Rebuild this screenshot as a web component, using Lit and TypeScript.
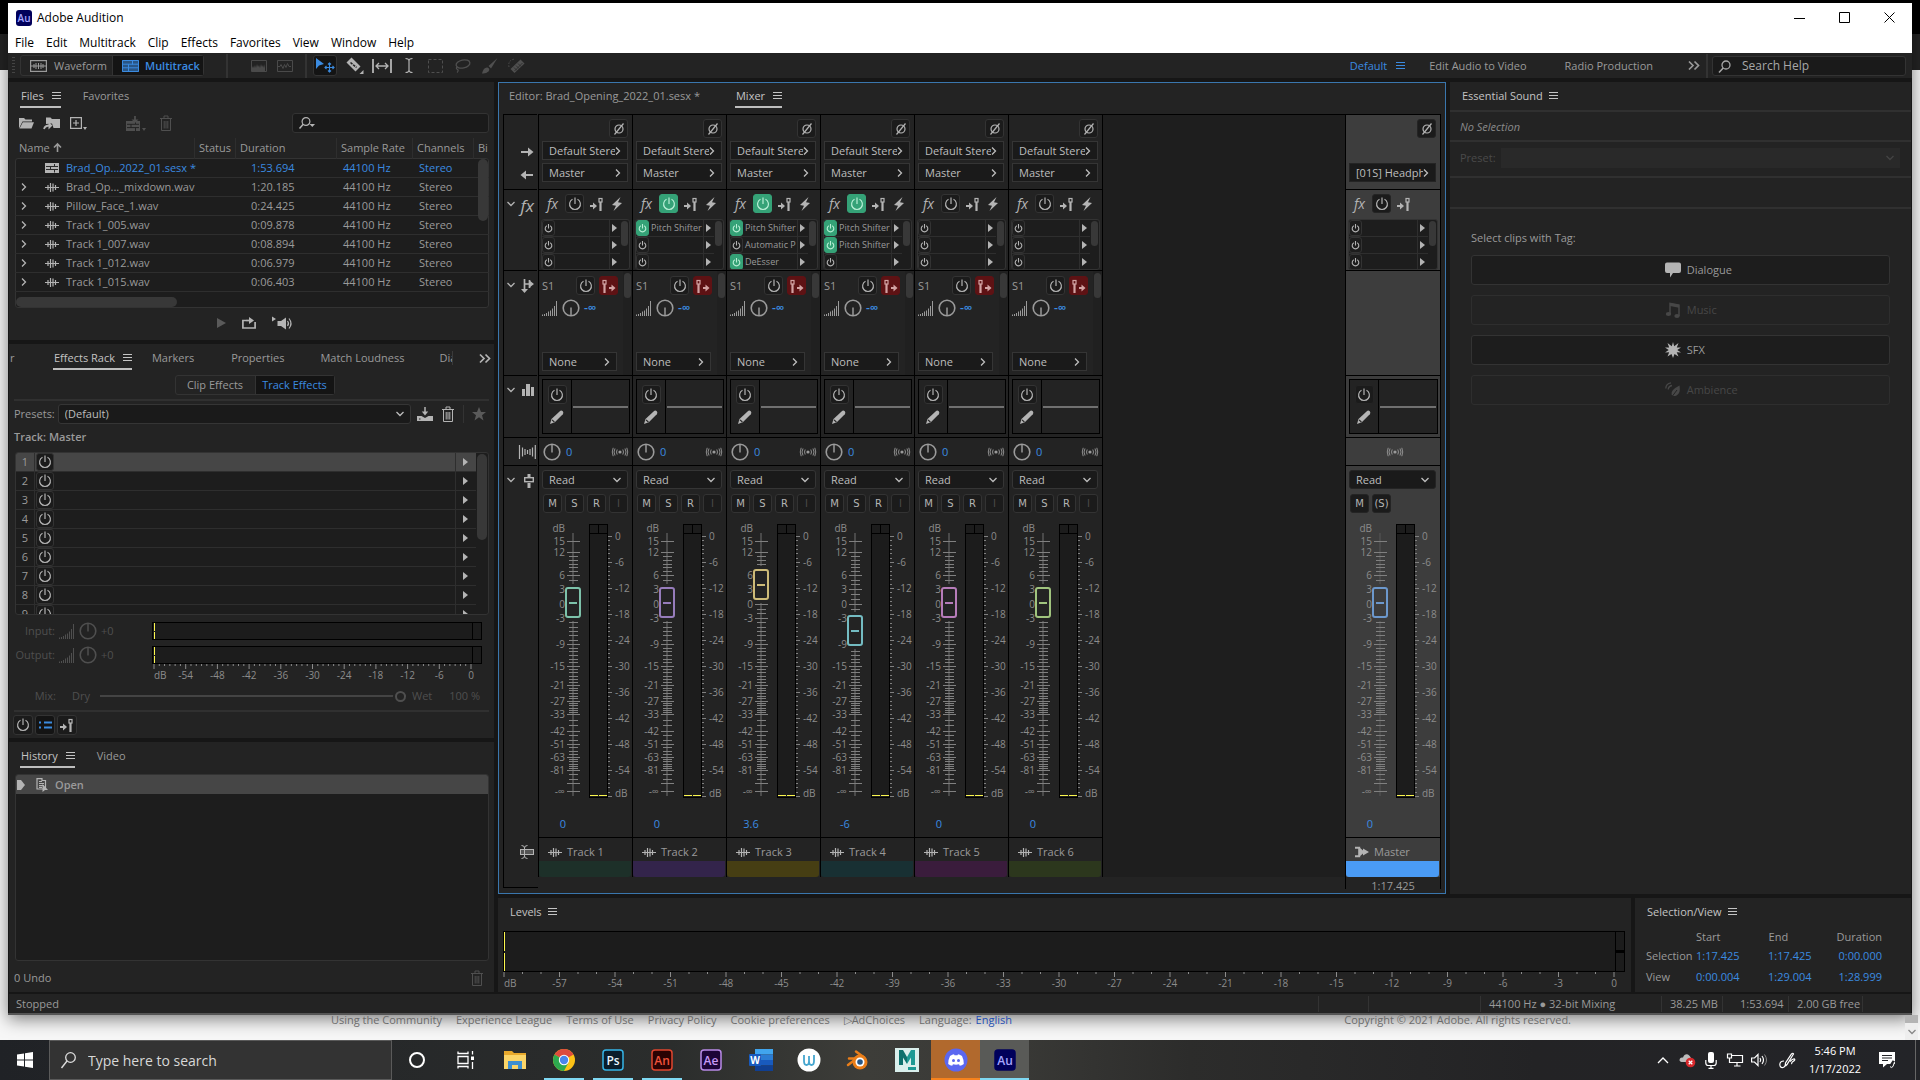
import { LitElement, html, css, svg, nothing } from "lit";
import { customElement, property } from "lit/decorators.js";
import { classMap } from "lit/directives/class-map.js";

/* ---------- icons: [width, height, drawing] ---------- */
const wave = svg`<path d="M0 6.500h14M3 4v5M5.500 2v9M8 2.500v8M10.500 4v5" stroke="currentColor" stroke-width="1.200" fill="none"/>`;
const trash = svg`<path d="M1 3.500h12M5 3V1h4v2M2.500 4v11.500h9V4M5.200 6v7.500M7 6v7.500M8.800 6v7.500" stroke="currentColor" fill="none"/>`;
const lens = svg`<circle cx="8" cy="5" r="4" fill="none" stroke="currentColor" stroke-width="1.300"/><path d="M5.200 8L1 12.500" stroke="currentColor" stroke-width="1.500"/>`;
const slider = (x: number) => svg`<path d="M${x} 5v9" stroke="currentColor" stroke-width="2.200"/><rect x="${x - 1.5}" y="1.500" width="3" height="3.500" fill="none" stroke="currentColor" stroke-width="1.200"/>`;

const ICONS: Record<string, [number, number, unknown]> = {
  wave: [14, 13, wave],
  trash: [14, 16, trash],
  lens: [13, 13, lens],
  burger: [9, 8, svg`<path d="M0 0.500h9M0 3.500h9M0 6.500h9" stroke="currentColor"/>`],
  power: [14, 14, svg`<path d="M4.500 2.300A5.400 5.400 0 1 0 9.500 2.300M7 0.500v6.500" fill="none" stroke="currentColor" stroke-width="1.200"/>`],
  powerSmall: [9, 9, svg`<path d="M2.800 1.700A3.300 3.300 0 1 0 6.200 1.700M4.500 0v4.500" fill="none" stroke="currentColor" stroke-width="1.100"/>`],
  phase: [12, 14, svg`<circle cx="6" cy="7" r="4" fill="none" stroke="currentColor" stroke-width="1.200"/><path d="M1.500 12.500L10.500 1.500" stroke="currentColor" stroke-width="1.200"/>`],
  right: [6, 8, svg`<path d="M1 0.500l3.500 3.500L1 7.500" fill="none" stroke="currentColor" stroke-width="1.300"/>`],
  down: [8, 6, svg`<path d="M0.500 1l3.500 3.500L7.500 1" fill="none" stroke="currentColor" stroke-width="1.300"/>`],
  more: [12, 9, svg`<path d="M1 0.500l4 4-4 4M6.500 0.500l4 4-4 4" fill="none" stroke="currentColor" stroke-width="1.700"/>`],
  tri: [5, 8, svg`<path d="M0 0l5 4-5 4z" fill="currentColor"/>`],
  pre: [14, 14, svg`<path d="M0 9h4" stroke="currentColor" stroke-width="2"/><path d="M3 5.500l4 3.500-4 3.500z" fill="currentColor"/>${slider(10.5)}`],
  post: [14, 14, svg`<path d="M7 9h4" stroke="currentColor" stroke-width="2"/><path d="M9.500 5.500l4 3.500-4 3.500z" fill="currentColor"/>${slider(2.5)}`],
  bolt: [12, 14, svg`<path d="M9.500 0L1 8l4 .7L2.500 14 11 6l-4-.8z" fill="currentColor"/>`],
  bars: [16, 15, svg`<path d="M0.500 15v-1.500M2.500 15v-2M4.500 15v-3M6.500 15v-4.500M8.500 15V9.500M10.500 15V7.500M12.500 15V5M14.500 15V0" stroke="currentColor"/>`],
  knobDown: [18, 18, svg`<circle cx="9" cy="9" r="7.800" fill="none" stroke="currentColor" stroke-width="1.600"/><path d="M9 8.500V16" stroke="currentColor" stroke-width="1.500"/>`],
  knobUp: [18, 18, svg`<circle cx="9" cy="9" r="7.800" fill="none" stroke="currentColor" stroke-width="1.600"/><path d="M9 2v7.500" stroke="currentColor" stroke-width="1.500"/>`],
  pencil: [14, 14, svg`<path d="M0 14l1.500-5L9.800 1.200Q11.300 0 12.800 1.300 14 3 12.800 4.300L4.800 12.200z" fill="currentColor"/><path d="M2 9.800L4.400 12" stroke="#232323" stroke-width="1.100"/>`],
  stereo: [16, 10, svg`<circle cx="8" cy="5" r="1.600" fill="currentColor"/><path d="M5.200 2.500Q3.800 5 5.200 7.500M3 1.500Q1 5 3 8.500M1.200 0.800Q-0.700 5 1.200 9.200M10.800 2.500Q12.200 5 10.800 7.500M13 1.500Q15 5 13 8.500M14.800 0.800Q16.700 5 14.800 9.200" fill="none" stroke="currentColor" stroke-width="0.900"/>`],
  inArrow: [14, 10, svg`<path d="M1 5h10" stroke="currentColor" stroke-width="2"/><path d="M8 0.500L13.500 5 8 9.500z" fill="currentColor"/>`],
  outArrow: [14, 10, svg`<path d="M3 5h10" stroke="currentColor" stroke-width="2"/><path d="M6 0.500L0.500 5 6 9.500z" fill="currentColor"/>`],
  sends: [13, 14, svg`<path d="M3.500 0v11M3.500 5h6M8.500 1v8" stroke="currentColor" stroke-width="1.700" fill="none"/><path d="M8.500 1.500l4.500 3.500-4.500 3.500zM0 10h7l-3.500 4z" fill="currentColor"/>`],
  eq: [12, 12, svg`<path d="M0 5h3v7H0zM4 0h4v12H4zM9 3h3v9H9z" fill="currentColor"/>`],
  pan: [17, 14, svg`<path d="M0.500 0v14M3.500 2.500v9M6 4v6M8.500 5v4M11 4v6M13.500 2.500v9M16.300 0v14" stroke="currentColor" stroke-width="1.200"/>`],
  fader: [10, 14, svg`<path d="M3.500 0h3v3h-3zM3.500 9h3v5h-3z" fill="currentColor"/><rect x="0.700" y="3.700" width="8.600" height="4" fill="none" stroke="currentColor" stroke-width="1.400"/>`],
  rename: [14, 14, svg`<rect x="0.500" y="4.500" width="13" height="5" fill="#555" stroke="currentColor"/><path d="M1.500 0.500Q4.500 0.500 4.500 3v8Q4.500 13.500 1.500 13.500M7.500 0.500Q4.500 0.500 4.500 3M4.500 11Q4.500 13.500 7.500 13.500" fill="none" stroke="currentColor"/>`],
  merge: [14, 12, svg`<path d="M0 1.800h4.200v8.400H0" stroke="currentColor" stroke-width="2" fill="none"/><path d="M4 1l4 3.500V2.500L14 6 8 9.500V7.500L4 11z" fill="currentColor"/>`],
  waveBox: [17, 12, svg`<rect x="0.600" y="0.600" width="15.800" height="10.800" fill="none" stroke="currentColor" stroke-width="1.200"/><path d="M1 6h15M4 4v4M6 3v6M8.500 3v6M11 3v6M13 4v4" stroke="currentColor"/>`],
  multi: [17, 12, svg`<path d="M0 0h17v12H0z" fill="currentColor" opacity=".55"/><path d="M0.500 0.500h16v11h-16zM0.500 4.200h16M0.500 7.800h16M10.500 0.500v4M6.500 4.200v7.300" fill="none" stroke="currentColor"/>`],
  session: [14, 10, svg`<path d="M0 0h14v10H0z" fill="currentColor"/><path d="M1 3.500h12M1 6.500h12M9.500 1v2.500M5.500 3.500v3M9.500 6.500v3" stroke="#2a2a2a" fill="none"/>`],
  spectral: [16, 12, svg`<path d="M0.500 0.500h15v11H.5z" fill="none" stroke="currentColor"/><path d="M1 11V8l1-2 1 2 1-3 1 3 1-4 1 3 1-2 1 3 1-4 1 3 1-2 1 3 1-4v7z" fill="currentColor"/>`],
  spectral2: [16, 12, svg`<path d="M0.500 0.500h15v11H.5zM1 6.500h2l1-2 2 4 1.500-4 1.500 3 1.500-4 1.500 3h2" fill="none" stroke="currentColor"/>`],
  move: [18, 15, svg`<path d="M0 0l8 6-5 1.500L0 11z" fill="currentColor"/><path d="M13.500 5v9M9 9.500h9M12 6.500l1.500-1.500L15 6.500M12 12.500l1.500 1.500 1.500-1.500M10.500 8L9 9.500l1.500 1.500M16.500 8L18 9.500 16.500 11" fill="none" stroke="currentColor" stroke-width="1.100"/>`],
  razor: [18, 17, svg`<path d="M5.500 0.500l9 9-5 5-9-9z" fill="currentColor"/><path d="M4.500 5.500l6 5" stroke="#232323" stroke-width="1.600" stroke-dasharray="2.500 1"/><path d="M17.500 13v4h-4z" fill="currentColor"/>`],
  slip: [20, 14, svg`<path d="M1 0v14M19 0v14" stroke="currentColor" stroke-width="1.800"/><path d="M4 7h12M7 4L4 7l3 3M13 4l3 3-3 3" fill="none" stroke="currentColor" stroke-width="1.300"/>`],
  ibeam: [8, 15, svg`<path d="M0.500 0.500Q4 0.500 4 3v9Q4 14.500 0.500 14.500M7.500 0.500Q4 0.500 4 3M4 12Q4 14.500 7.500 14.500" fill="none" stroke="currentColor" stroke-width="1.200"/>`],
  marquee: [15, 14, svg`<rect x="0.500" y="0.500" width="14" height="13" fill="none" stroke="currentColor" stroke-dasharray="3 2"/>`],
  lasso: [17, 14, svg`<ellipse cx="9" cy="5" rx="7" ry="4" fill="none" stroke="currentColor" stroke-width="1.300" transform="rotate(-12 9 5)"/><path d="M3 8q-1.500 1.500.5 2.500Q5 11.500 3 13.500" fill="none" stroke="currentColor" stroke-width="1.200"/>`],
  brush: [16, 16, svg`<path d="M15.500 0L6.500 8l2.500 2.500z" fill="currentColor"/><path d="M0 15.500Q1.500 9 5.500 9.500 8.500 11 6.500 13.500 4 16 0 15.500z" fill="currentColor"/>`],
  heal: [17, 16, svg`<path d="M12.500 1.500l4 4L6.500 15l-4-4z" fill="currentColor"/><path d="M8 7.500l3 3M10 5.500l3 3M6 9.500l3 3M6.500 13l8-8" stroke="#232323" stroke-width=".7"/><path d="M1 9Q-.5 2 7 1" fill="none" stroke="currentColor" stroke-dasharray="1.500 1.500"/>`],
  open: [15, 12, svg`<path d="M0 11.500V1h5l1.500 1.500H13V4.500H3.500z" fill="currentColor"/><path d="M3.800 5.300H15L12.500 11.500H0.500z" fill="currentColor"/>`],
  import: [16, 13, svg`<path d="M2 7V0.500h4.500L8 2h8v9H9.500L8 6.500z" fill="currentColor"/><path d="M0 12Q1 8.500 5.500 8.500" fill="none" stroke="currentColor" stroke-width="1.800"/><path d="M4.500 5l4 3.500-4 4z" fill="currentColor"/>`],
  add: [17, 13, svg`<path d="M0.600 0.600h10.800v10.800H.6zM3 6h6M6 3v6" fill="none" stroke="currentColor" stroke-width="1.200"/><path d="M13 10h4l-2 3z" fill="currentColor"/>`],
  insert: [20, 15, svg`<path d="M0 5h14v10H0z" fill="currentColor"/><path d="M1 8.300h12M1 11.600h12M5 8v3.500M9.500 11.500V15M9.500 5v3" stroke="#232323" fill="none"/><path d="M9 0v4" stroke="currentColor" stroke-width="1.800"/><path d="M5.500 3.500h7L9 7z" fill="currentColor"/><path d="M16 12h4l-2 3z" fill="currentColor"/>`],
  find: [16, 12, svg`<circle cx="7" cy="4.500" r="3.900" fill="none" stroke="currentColor" stroke-width="1.200"/><path d="M4.200 7.300L0.500 11.500" stroke="currentColor" stroke-width="1.500"/><path d="M10.500 7h5.500l-2.700 3z" fill="currentColor"/>`],
  up: [9, 9, svg`<path d="M4.500 9V1M1 4.500L4.500 1 8 4.500" fill="none" stroke="currentColor" stroke-width="1.600"/>`],
  play: [9, 10, svg`<path d="M0 0l9 5-9 5z" fill="currentColor"/>`],
  loop: [14, 12, svg`<path d="M4 3.500H.9V11h12.200V5" fill="none" stroke="currentColor" stroke-width="1.700"/><path d="M4 3.500h4" stroke="currentColor" stroke-width="1.700"/><path d="M7 0l5 3.500L7 7z" fill="currentColor"/>`],
  speaker: [21, 14, svg`<path d="M0 0.500l4 2.500-4 2.500zM5.500 5h3.500L14 1.500v12L9 10H5.500z" fill="currentColor"/><path d="M15.500 5Q17.500 7.500 15.500 10M17 2.500Q21 7.500 17 12.500" fill="none" stroke="currentColor" stroke-width="1.200"/>`],
  save: [16, 14, svg`<path d="M0 9h4.500l3.500 2 3.500-2H16v5H0z" fill="currentColor"/><path d="M8 0v6" stroke="currentColor" stroke-width="1.500"/><path d="M4.800 4.500h6.400L8 8.500z" fill="currentColor"/><path d="M2 12h1.500" stroke="#232323"/>`],
  star: [14, 14, svg`<path d="M7 0l2 5h5l-4 3.300L11.500 13.500 7 10.300 2.500 13.500 4 8.300 0 5h5z" fill="currentColor"/>`],
  list: [13, 8, svg`<path d="M0 1.500h2M0 6.500h2M5 1.500h8M5 6.500h8" stroke="currentColor" stroke-width="1.800"/>`],
  doc: [13, 14, svg`<path d="M1 0.700h5V2.500h3.500V11H1zM3 3.500h3M3 5.500h5M3 7.500h5M3 9.300h3" fill="none" stroke="currentColor" stroke-width="1.200"/><path d="M6.500 6l5.500 6H9l-2.500 2z" fill="currentColor"/>`],
  marker: [8, 10, svg`<path d="M0 0h4l4 5-4 5H0z" fill="currentColor"/>`],
  dialogue: [16, 16, svg`<path d="M2 0.500h12q2 0 2 2v6.500q0 2-2 2H8L5 15.500V11H2q-2 0-2-2V2.500q0-2 2-2z" fill="currentColor"/>`],
  music: [16, 16, svg`<path d="M5 12V1.500l9 1.700V14" fill="none" stroke="currentColor" stroke-width="1.500"/><path d="M5 1l9 1.700v3L5 4z" fill="currentColor"/><ellipse cx="3.500" cy="12" rx="2.700" ry="2" fill="currentColor"/><ellipse cx="12" cy="14" rx="2.700" ry="2" fill="currentColor"/>`],
  sfx: [16, 16, svg`<path d="M8 0l1.200 4.200L13.500 1l-1.700 4.500L16 5.500l-3.700 2.500L16 10.500l-4.300-.3 1.800 4.300L9.500 12 8 16l-1.500-4L2.500 14.500l1.700-4.300L0 10.500 3.700 8 0 5.500l4.200 0L2.500 1l4.300 3.200z" fill="currentColor"/>`],
  ambience: [16, 16, svg`<path d="M14.500 3.500Q16 11 11.500 13.500 8 15 6.500 12.500 5.500 8 14.500 3.500z" fill="currentColor"/><path d="M6 16l6-8" stroke="#232323"/><path d="M0.800 6.500Q1 1.500 6 0.800M3.200 7.500Q3.500 4.200 7 3.500" fill="none" stroke="currentColor" stroke-width="1.300"/>`],
};

const icon = (name: string) => {
  const [w, h, body] = ICONS[name];
  return html`<svg class="ic" width=${w} height=${h} viewBox="0 0 ${w} ${h}" aria-hidden="true">${body}</svg>`;
};

/* ---------- shared styles ---------- */
const base = css`
  * { box-sizing: border-box; }
  button, select, input {
    font: inherit; color: inherit; margin: 0; padding: 0; border: 0;
    background: none; border-radius: 0; outline: 0;
  }
  select { appearance: none; }
  .ic { display: block; flex: none; overflow: visible; }
  .sq {
    display: grid; place-items: center; width: 19px; height: 19px; flex: none;
    background: #1b1b1b; border: 1px solid #333; border-radius: 3px; color: #b4b4b4;
  }
  .dd { display: grid; align-items: center; height: 19px; background: #1a1a1a; border: 1px solid #353535; color: #bdbdbd; }
  .dd > * { grid-area: 1 / 1; }
  .dd select { width: 100%; height: 100%; padding: 0 12px 0 6px; }
  .dd .ic { justify-self: end; margin-right: 6px; pointer-events: none; }
  .blue { color: #3b8be0; }
`;

/* ---------- fader scale ---------- */
type Mark = [string, number, number];
/* label, vertical position, minor ticks before the next mark */
const FADER_MARKS: Mark[] = [
  ["15", 25, 0], ["12", 36, 5], ["6", 59, 2], ["3", 73, 2], ["0", 88, 2], ["-3", 102, 5],
  ["-9", 128, 5], ["-15", 150, 5], ["-21", 169, 5], ["-27", 185, 5], ["-33", 198, 2],
  ["-42", 215, 2], ["-51", 228, 3], ["-63", 241, 5], ["-81", 254, 2], ["", 267, 0], ["-∞", 275, 0],
];
const METER_TOP = 20;
const METER_STEP = 26;

const faderScale = () => {
  const out: unknown[] = [];
  FADER_MARKS.forEach(([label, y, minors], i) => {
    out.push(svg`<path class="tick" d="M28 ${y + 0.5}h13"/>`);
    if (label) out.push(svg`<text x="26" y=${y + 4} text-anchor="end">${label}</text>`);
    const next = FADER_MARKS[i + 1];
    for (let k = 1; next && k <= minors; k++) {
      const my = Math.round(y + ((next[1] - y) * k) / (minors + 1)) + 0.5;
      out.push(svg`<path class="tick" d="M30 ${my}h9"/>`);
    }
  });
  for (let db = 0; db <= 60; db++) {
    const y = Math.round(METER_TOP + (db * METER_STEP) / 6) + 0.5;
    out.push(svg`<path class="tick" d="M69 ${y}h${db % 6 ? 2 : 4}"/>`);
    if (db % 6 === 0 && db < 60) out.push(svg`<text x="76" y=${y + 3.5}>${db ? -db : 0}</text>`);
  }
  return html`<svg class="scale" width="93" height="284" viewBox="0 0 93 284">
    <rect x="33" y="17" width="2" height="263" fill="#4a4a4a" />
    ${out}
    <text x="26" y="16" text-anchor="end">dB</text>
    <text x="76" y="281">dB</text>
    <rect x="50.500" y="8.500" width="18" height="273" fill="#1c1c1c" stroke="#000" />
    <path d="M50 17.500h19M59.500 8v9.500" stroke="#000" />
    <path d="M51 279.500h8M60 279.500h8" stroke="#fbf64e" />
  </svg>`;
};

interface Slot { name?: string; on?: boolean; }

@customElement("channel-strip")
export class ChannelStrip extends LitElement {
  @property() label = "";
  @property() input = "";
  @property() output = "";
  @property() volume = "0";
  @property({ type: Number }) position = 180;
  @property() accent = "";
  @property() swatch = "";
  @property({ type: Boolean, reflect: true }) master = false;
  @property({ attribute: false }) slots: Slot[] = [{}, {}, {}];

  static styles = [base, css`
    :host {
      display: flex; flex-direction: column; width: 94px; flex: none;
      border-left: 1px solid #000; background: #232323; --bg: #232323;
      color: #9a9a9a; font-size: 11px; line-height: 14px;
    }
    :host([master]) { width: 96px; border-right: 1px solid #000; background: #3d3d3d; --bg: #3d3d3d; }
    .sec { border-top: 1px solid #000; flex: none; overflow: hidden; }
    .io { height: 75px; padding: 4px 4px 7px 3px; display: flex; flex-direction: column; justify-content: space-between; }
    .io .sq { align-self: flex-end; }
    .fx { height: 81px; }
    .fxhead { display: flex; align-items: center; gap: 6px; padding: 4px 0 6px 8px; }
    .fxname { font-style: italic; font-size: 14px; width: 12px; color: #b4b4b4; }
    .plain { display: grid; place-items: center; width: 14px; height: 19px; color: #b4b4b4; }
    .on { background: #35a277; border-color: #35a277; color: #b9efd6; }
    .rack { display: flex; margin: 0 2px; background: #1d1d1d; border: 1px solid #333; border-radius: 3px; height: 51px; overflow: hidden; }
    .rows { flex: 1; min-width: 0; }
    .row { display: flex; align-items: center; height: 17px; border-bottom: 1px solid #2e2e2e; font-size: 9px; }
    .row .mini { display: grid; place-items: center; width: 13px; height: 16px; flex: none; border: 1px solid #333; border-radius: 3px; color: #b4b4b4; }
    .row .mini.on { background: #35a277; border-color: #35a277; color: #b9efd6; }
    .row span { flex: 1; overflow: hidden; white-space: nowrap; padding-left: 2px; }
    .row .go { display: grid; place-items: center start; width: 11px; height: 16px; padding-left: 2px; color: #b4b4b4; border-left: 1px solid #2e2e2e; }
    .bar { width: 9px; flex: none; }
    .bar i { display: block; height: 25px; margin: 1px; border-radius: 4px; background: #383838; }
    .send { height: 105px; display: flex; }
    .sendmain { flex: 1; display: flex; flex-direction: column; padding: 5px 3px 4px; }
    .sendtop { display: flex; align-items: center; gap: 4px; }
    .sendtop b { font-weight: 400; flex: 1; }
    .red { background: #5e1214; border-color: #5e1214; color: #d2a3a3; margin-right: 2px; }
    .sendlvl { display: flex; align-items: center; gap: 4px; margin: 4px 0 auto; color: #9a9a9a; }
    .sendlvl .blue { font-size: 12px; font-weight: 600; }
    .send .dd { width: 75px; }
    .send .bar { background: #202020; padding-top: 1px; }
    .eq { height: 62px; padding: 3px 2px 3px 3px; }
    .eqbox { height: 55px; display: flex; border: 1px solid #000; background: #232323; }
    .eqbtns { width: 29px; border-right: 1px solid #000; display: flex; flex-direction: column; align-items: center; gap: 6px; padding-top: 5px; color: #b4b4b4; }
    .curve { flex: 1; margin: 26px 1px 0; border-top: 2px solid #707070; }
    .pan { height: 28px; display: flex; align-items: center; gap: 5px; padding: 0 4px 0 4px; }
    .pan .ic:last-child { margin-left: auto; }
    :host([master]) .pan { justify-content: center; padding-left: 8px; }
    :host([master]) .pan .ic:last-child { margin: 0; }
    .main { flex: 1 0 372px; padding: 4px 4px 0 3px; position: relative; }
    .main .dd { border-radius: 3px; }
    .msri { display: flex; gap: 3px; padding: 5px 0 0 1px; }
    .msri .sq { font-family: "DejaVu Sans", sans-serif; font-size: 10px; }
    .msri .sq:disabled { color: #4a4a4a; }
    .fader { position: relative; margin: 3px -4px 0 -3px; height: 284px; }
    .scale { display: block; font-size: 10px; }
    .scale text { fill: #8c8c8c; }
    .tick { stroke: #808080; }
    .fader input {
      position: absolute; left: 26px; top: 8px; width: 16px; height: 274px;
      appearance: none; writing-mode: vertical-lr; direction: rtl;
    }
    .fader input::-webkit-slider-thumb {
      appearance: none; width: 16px; height: 31px; border-radius: 3px;
      border: 2px solid var(--accent);
      background: linear-gradient(var(--accent), var(--accent)) center / 8px 2px no-repeat var(--bg);
      box-shadow: 0 4px 0 -1px var(--bg), 0 -4px 0 -1px var(--bg);
    }
    .vol { width: 42px; text-align: center; padding-top: 17px; }
    .foot { height: 40px; display: flex; flex-direction: column; }
    .name { flex: 1; display: flex; align-items: center; gap: 5px; padding: 5px 0 0 9px; }
    .name .ic { color: #b4b4b4; }
    .swatch { height: 16px; margin-right: 1px; border-radius: 0 0 3px 3px; background: var(--swatch); }
    :host([master]) .sq, :host([master]) .dd { border-color: #242424; }
    .gone { visibility: hidden; }
  `];

  private slotRow(s: Slot) {
    return html`<div class="row">
      <button class=${classMap({ mini: true, on: !!s.on })} aria-label="Effect power">${icon("powerSmall")}</button>
      <span>${s.name ?? ""}</span>
      <button class="go" aria-label="Choose effect">${icon("tri")}</button>
    </div>`;
  }

  render() {
    const active = this.slots.some((s) => s.on);
    const buttons = this.master ? ["M", "(S)"] : ["M", "S", "R", "I"];
    return html`
      <div class="sec io">
        <button class="sq" aria-label="Invert phase">${icon("phase")}</button>
        <div class=${classMap({ dd: true, gone: !this.input })}>
          <select aria-label="Input"><option>${this.input}</option></select>${icon("right")}
        </div>
        <div class="dd"><select aria-label="Output"><option>${this.output}</option></select>${icon("right")}</div>
      </div>
      <div class="sec fx">
        <div class="fxhead">
          <span class="fxname">fx</span>
          <button class=${classMap({ sq: true, on: active })} aria-label="Effects power">${icon("power")}</button>
          <button class="plain" aria-label="Pre or post fader">${icon("pre")}</button>
          ${this.master ? nothing : html`<button class="plain" aria-label="Pre-render track">${icon("bolt")}</button>`}
        </div>
        <div class="rack">
          <div class="rows">${this.slots.map((s) => this.slotRow(s))}</div>
          <div class="bar"><i></i></div>
        </div>
      </div>
      <div class="sec send">
        ${this.master ? nothing : html`
          <div class="sendmain">
            <div class="sendtop"><b>S1</b>
              <button class="sq" aria-label="Send power">${icon("power")}</button>
              <button class="sq red" aria-label="Send pre or post fader">${icon("post")}</button>
            </div>
            <div class="sendlvl">${icon("bars")}${icon("knobDown")}<span class="blue">-∞</span></div>
            <div class="dd"><select aria-label="Send to"><option>None</option></select>${icon("right")}</div>
          </div>
          <div class="bar"><i></i></div>`}
      </div>
      <div class="sec eq"><div class="eqbox">
        <div class="eqbtns"><button class="sq" aria-label="EQ power">${icon("power")}</button>${icon("pencil")}</div>
        <div class="curve"></div>
      </div></div>
      <div class="sec pan">
        ${this.master ? nothing : html`${icon("knobUp")}<span class="blue">0</span>`}${icon("stereo")}
      </div>
      <div class="sec main">
        <div class="dd"><select aria-label="Automation mode"><option>Read</option></select>${icon("down")}</div>
        <div class="msri">${buttons.map((b) => html`<button class="sq" ?disabled=${b === "I"}>${b}</button>`)}</div>
        <div class="fader" style="--accent:${this.accent}">
          ${faderScale()}
          <input type="range" min="0" max="243" .value=${String(this.position)} aria-label="${this.label} volume" />
        </div>
        <div class="vol blue">${this.volume}</div>
      </div>
      <div class="sec foot">
        <div class="name">${icon(this.master ? "merge" : "wave")}${this.label}</div>
        <div class="swatch" style="--swatch:${this.swatch}"></div>
      </div>`;
  }
}

/* ---------- data ---------- */
const MENU = ["File", "Edit", "Multitrack", "Clip", "Effects", "Favorites", "View", "Window", "Help"];
const FILES = [
  ["Brad_Op...2022_01.sesx *", "1:53.694"], ["Brad_Op..._mixdown.wav", "1:20.185"],
  ["Pillow_Face_1.wav", "0:24.425"], ["Track 1_005.wav", "0:09.878"],
  ["Track 1_007.wav", "0:08.894"], ["Track 1_012.wav", "0:06.979"], ["Track 1_015.wav", "0:06.403"],
];
const PS = { name: "Pitch Shifter", on: true };
const TRACKS = [
  { accent: "#7dc2aa", swatch: "#1d3029", pos: 180, vol: "0", slots: [{}, {}, {}] },
  { accent: "#967cbb", swatch: "#33244b", pos: 180, vol: "0", slots: [PS, {}, {}] },
  { accent: "#cdbb78", swatch: "#463e13", pos: 198, vol: "3.6", slots: [PS, { name: "Automatic P" }, { name: "DeEsser", on: true }] },
  { accent: "#74bcc2", swatch: "#183033", pos: 152, vol: "-6", slots: [PS, PS, {}] },
  { accent: "#b67cb9", swatch: "#3a1c3c", pos: 180, vol: "0", slots: [{}, {}, {}] },
  { accent: "#a0c47e", swatch: "#2c371d", pos: 180, vol: "0", slots: [{}, {}, {}] },
];
const TAGS: [string, string, boolean][] = [
  ["dialogue", "Dialogue", true], ["music", "Music", false], ["sfx", "SFX", true], ["ambience", "Ambience", false],
];

/* horizontal ruler running from -floor dB at the left to 0 at the right */
const ruler = (floor: number, step: number, minor: number) => {
  const out: unknown[] = [];
  for (let db = 0; db <= floor; db += minor) {
    const x = `${(100 * db) / floor}%`;
    const major = db % step === 0;
    out.push(svg`<line x1=${x} x2=${x} y1="0" y2=${major ? 5 : 2} stroke="#8c8c8c"/>`);
    if (major) out.push(svg`<text x=${x} y="15" text-anchor=${db ? "middle" : "start"}>${db ? db - floor : "dB"}</text>`);
  }
  return html`<svg class="ruler" width="100%" height="18">${out}</svg>`;
};

const app = (label: string, bg: string, fg: string, edge: string) => svg`
  <rect x="1" y="1" width="20" height="20" rx="3" fill=${bg} stroke=${edge} stroke-width="1.500"/>
  <text x="11" y="15.500" text-anchor="middle" font-size="12" font-weight="600" fill=${fg}>${label}</text>`;

const TASKS: { label: string; art: unknown; cls?: string }[] = [
  { label: "Cortana", art: svg`<circle cx="11" cy="11" r="7" fill="none" stroke="#fff" stroke-width="2"/>` },
  { label: "Task View", art: svg`<path d="M3 2.500v2h10v-2M3 19.500v-2h10v2M3 7.500h10v7H3zM17.500 2v3.500M17.500 13v7" fill="none" stroke="#fff" stroke-width="1.300"/><rect x="16" y="7.500" width="3" height="3.500" fill="#fff"/>` },
  { label: "File Explorer", art: svg`<path d="M0 2h8l2 2h12v16H0z" fill="#e8a92c"/><path d="M0 6h22v14H0z" fill="#fbd568"/><path d="M4 12h14v8h-4v-4H8v4H4z" fill="#3d8fd1"/>` },
  { label: "Chrome", cls: "open", art: svg`<circle cx="11" cy="11" r="11" fill="#fbc116"/><path d="M11 11L1.500 5.500A11 11 0 0 1 20.500 5.500z" fill="#dd4b3e"/><path d="M1.500 5.500A11 11 0 0 0 11 22l4.500-8.500L11 11z" fill="#2da94f"/><circle cx="11" cy="11" r="5.200" fill="#fff"/><circle cx="11" cy="11" r="4.200" fill="#4a86ec"/>` },
  { label: "Photoshop", cls: "open", art: app("Ps", "#0a1d2b", "#e8f6ff", "#36b5e8") },
  { label: "Animate", cls: "open", art: app("An", "#2b0303", "#f0543c", "#e0452e") },
  { label: "After Effects", art: app("Ae", "#1d0538", "#c799f5", "#b98ae8") },
  { label: "Word", art: svg`<path d="M6 0h18v5.500H6z" fill="#41a5ee"/><path d="M6 5.500h18V11H6z" fill="#2b7cd3"/><path d="M6 11h18v5.500H6z" fill="#185abd"/><path d="M6 16.500h18V22H6z" fill="#103f91"/><rect y="5" width="12" height="12" rx="1" fill="#185abd"/><text x="6" y="14.500" font-size="10" font-weight="700" text-anchor="middle" fill="#fff">W</text>` },
  { label: "Wacom", art: svg`<circle cx="11" cy="11" r="11.500" fill="#fff"/><path d="M6 6v6q0 4 2.500 4T11 12V7M11 12q0 4 2.500 4T16 12V6" fill="none" stroke="#46a6cf" stroke-width="1.800"/>` },
  { label: "Blender", art: svg`<circle cx="13" cy="13" r="7.500" fill="#ea7e19"/><path d="M1 16l12-9M2 9.500h12M9 2.500l8 6" stroke="#ea7e19" stroke-width="2.500" stroke-linecap="round"/><circle cx="13" cy="13" r="4.500" fill="#fff"/><circle cx="13" cy="13" r="2.800" fill="#265787"/>` },
  { label: "Maya", art: svg`<rect x="-1" y="-1" width="24" height="24" fill="#d9efec"/><path d="M3 16V1h4l4 7V15L7 8.500V16z" fill="#0d716d"/><path d="M19 16V1h-4l-4 7V15l4-6.500V16z" fill="#1c9a94"/><path d="M12 19.500h8" stroke="#1c9a94" stroke-width="3"/>` },
  { label: "Discord", cls: "alert", art: svg`<circle cx="11" cy="11" r="11.500" fill="#5b67f0"/><path d="M5 7q2.500-1.600 4-1.700l.5 1h3l.5-1q1.500.1 4 1.700 2 4 1.800 8-2 1.500-4 1.700L14 15.300q-3 .9-6 0l-.8 1.400q-2-.2-4-1.700Q3 11 5 7z" fill="#fff"/><circle cx="8.500" cy="11.500" r="1.500" fill="#5b67f0"/><circle cx="13.500" cy="11.500" r="1.500" fill="#5b67f0"/>` },
  { label: "Audition", cls: "current", art: app("Au", "#00005b", "#a5a5ff", "#00005b") },
];

@customElement("app-root")
export class AppRoot extends LitElement {
  static styles = [base, css`
    :host {
      display: flex; flex-direction: column; min-height: 100vh; overflow: hidden;
      font: 11px/14px "Open Sans", "Noto Sans", sans-serif; color: #9a9a9a;
      background: linear-gradient(#000 34px, #242424 34px, #242424 70px, #f7f7f7 70px);
    }
    h2 { margin: 0; font: inherit; }
    .window {
      flex: 1; margin: 3px 8px 0; display: flex; flex-direction: column;
      background: #161616; box-shadow: 0 4px 16px rgba(0, 0, 0, .5); border-bottom: 2px solid #555;
    }
    /* title and menus */
    .title { display: flex; align-items: center; height: 28px; padding: 1px 0 0 8px; gap: 5px; background: #fff; color: #000; font-size: 12px; }
    .au { display: grid; place-items: center; width: 16px; height: 16px; border-radius: 3px; background: #00005b; color: #a5a5ff; font-size: 10px; font-weight: 600; }
    .winbtns { margin-left: auto; display: flex; }
    .winbtns button { width: 45px; height: 28px; display: grid; place-items: center; }
    .menu { display: flex; gap: 12px; height: 22px; padding: 2px 7px 0; background: #fff; color: #000; font-size: 12px; }
    .menu button { height: 20px; }
    /* toolbar */
    .tools { display: flex; align-items: center; height: 25px; margin-bottom: 4px; padding: 0 6px 0 4px; background: #232323; }
    .grip { width: 3px; height: 18px; margin-right: 5px; background: repeating-linear-gradient(#444 0 1px, transparent 1px 3px); }
    .seg { display: flex; border: 1px solid #333; border-radius: 3px; }
    .seg button { display: flex; align-items: center; width: 91px; height: 19px; gap: 7px; padding: 0 0 0 9px; }
    .seg .sel { background: #141414; color: #3b8be0; border-left: 1px solid #333; }
    .tools .seg .sel { font-weight: 600; gap: 6px; }
    .vsep { width: 2px; height: 24px; background: #333; }
    .view { display: flex; align-items: center; gap: 10px; margin: 0 12px 0 22px; color: #4a4a4a; }
    .view .vsep { margin-right: 13px; }
    .toolset { display: flex; align-items: center; color: #b4b4b4; padding-left: 6px; }
    .toolset button { width: 27px; height: 21px; display: grid; place-items: center; }
    .toolset .sel { width: 24px; background: #141414; border: 1px solid #333; border-radius: 3px; color: #3b8be0; margin-right: 4px; }
    .toolset button:disabled { color: #4f4f4f; }
    .spaces { margin-left: auto; display: flex; align-items: center; }
    .spaces a { color: inherit; text-decoration: none; }
    .spaces .blue { color: #3b8be0; display: flex; align-items: center; gap: 9px; }
    .spaces .w1 { margin: 0 38px 0 24px; }
    .spaces .w2 { margin-right: 35px; }
    .tools > .last { margin-left: 6px; }
    .help { display: flex; align-items: center; gap: 11px; width: 194px; height: 20px; margin-left: 4px; padding: 1px 0 0 5px; border: 1px solid #333; border-radius: 3px; background: #1a1a1a; color: #a8a8a8; font-size: 12px; }
    .help input { flex: 1; min-width: 0; }
    .help input::placeholder { color: #a8a8a8; opacity: 1; }
    /* panel grid */
    .work { flex: 1; display: grid; grid-template-columns: 485px minmax(0, 1fr); gap: 4px; padding: 0 1px; }
    .left { display: grid; grid-template-rows: 258px 394px minmax(250px, 1fr); gap: 4px; min-width: 0; }
    .right { display: grid; grid-template-rows: minmax(0, 1fr) 94px; gap: 4px; min-width: 0; }
    .upper { display: grid; grid-template-columns: minmax(0, 1fr) 461px; gap: 4px; }
    .lower { display: grid; grid-template-columns: minmax(0, 1fr) 276px; gap: 4px; }
    .panel { background: #232323; min-width: 0; overflow: hidden; display: flex; flex-direction: column; }
    .tabs { display: flex; align-items: flex-start; height: 29px; padding: 7px 0 0 11px; flex: none; white-space: nowrap; }
    .tab { padding-bottom: 3px; height: 19px; }
    .tab.act { display: flex; align-items: center; gap: 8px; color: #c4c4c4; border-bottom: 2px solid #bdbdbd; padding: 0 0 3px 1px; }
    .tab.flat { border-color: transparent; gap: 6px; }
    /* files */
    .ftools { display: flex; align-items: center; height: 20px; margin-top: 2px; padding: 0 5px 0 10px; color: #b4b4b4; }
    .ftools button + button { margin-left: 10px; }
    .ftools .dim { color: #4f4f4f; }
    .ftools button.far { margin-left: 39px; }
    .ftools button.bin { margin-left: 13px; }
    .find { display: flex; align-items: center; width: 197px; height: 20px; margin-left: auto; padding: 0 6px; border: 1px solid #333; border-radius: 3px; background: #1a1a1a; }
    .find input { flex: 1; min-width: 0; }
    .files { display: grid; margin: 5px 5px 0 6px; height: 170px; position: relative; }
    .files > * { grid-area: 1 / 1; }
    .frame { margin-top: 20px; border: 1px solid #333; border-radius: 3px; background: #1d1d1d; }
    .files table { table-layout: fixed; width: 100%; border-spacing: 0; align-self: start; position: relative; }
    .files th { height: 21px; padding: 0 0 2px 4px; font-weight: 400; text-align: left; border-right: 1px solid #2e2e2e; white-space: nowrap; overflow: hidden; }
    .files th:last-child { border: 0; }
    .files th span { display: flex; gap: 3px; align-items: center; }
    .files td { height: 19px; padding: 0 0 0 6px; border-bottom: 1px solid #2e2e2e; white-space: nowrap; }
    .files td.dur { padding-left: 15px; }
    .files td div { display: grid; grid-template-columns: 24px 21px 1fr; align-items: center; }
    .files td .ic { color: #b4b4b4; }
    .c1 { width: 180px; } .c2 { width: 41px; } .c3 { width: 101px; } .c4 { width: 76px; } .c5 { width: 61px; }
    .thumb { background: #383838; border-radius: 5px; }
    .files .tv { justify-self: end; width: 10px; height: 62px; margin: 21px 1px 0 0; position: relative; }
    .files .th { align-self: end; width: 161px; height: 10px; margin: 0 0 1px 1px; }
    .transport { display: flex; align-items: center; justify-content: center; gap: 16px; height: 30px; padding-left: 6px; color: #b4b4b4; }
    .transport .dim { color: #5a5a5a; }
    .files tr.hot td { color: #3b8be0; }
    /* effects rack */
    .rtabs { padding-left: 1px; padding-right: 3px; }
    .rtabs .cut { width: 43px; }
    .rtabs .t2 { margin-left: 20px; } .rtabs .t3 { margin-left: 37px; } .rtabs .t4 { margin-left: 36px; }
    .rtabs .t5 { margin-left: 35px; width: 14px; overflow: hidden; border-right: 1px solid #3a3a3a; }
    .rtabs .m { margin: 3px 0 0 auto; color: #b4b4b4; }
    .mode { align-self: center; margin: 2px 0 4px 6px; }
    .mode button { height: 18px; width: 79px; justify-content: center; padding: 0; }
    .hr { height: 2px; background: #303030; flex: none; }
    .rack .hr { margin: 0 5px; }
    .preset { display: flex; align-items: center; padding: 3px 8px 0 5px; gap: 8px; color: #b4b4b4; }
    .preset label { color: #9a9a9a; margin-right: -5px; }
    .preset .dd { flex: 1; height: 20px; margin-right: -2px; border-radius: 3px; }
    .preset .vsep { width: 1px; height: 18px; }
    .preset .st { color: #5a5a5a; }
    .trk { font-weight: 600; padding: 6px 5px 8px; }
    .slots { display: flex; margin: 0 5px 0 6px; height: 163px; border: 1px solid #333; border-radius: 3px; background: #1d1d1d; overflow: hidden; flex: none; }
    .slots ol { flex: 1; margin: 0; padding: 0; list-style: none; }
    .slots li { display: grid; grid-template-columns: 19px 20px 1fr 21px; align-items: center; height: 19px; border-bottom: 1px solid #2e2e2e; }
    .slots li span { text-align: center; border-right: 1px solid #2e2e2e; line-height: 18px; }
    .slots li .sq { height: 18px; width: 18px; margin-left: 1px; }
    .slots li .go { grid-column: 4; height: 18px; display: grid; place-items: center; border-left: 1px solid #2e2e2e; color: #b4b4b4; padding-right: 2px; }
    .slots li.sel { background: #464646; }
    .slots .thumb { width: 10px; height: 86px; margin: 1px 1px 0 1px; }
    .meters { display: grid; grid-template-columns: 41px 16px 18px 47px minmax(0, 1fr); gap: 6px 4px; align-items: center; padding: 7px 12px 0 5px; color: #4f4f4f; }
    .meters .lab { text-align: right; }
    .meter { display: flex; height: 18px; border: 1px solid #000; background: #1c1c1c; padding-left: 1px; }
    .meter::before { content: ""; flex: none; width: 1px; background: linear-gradient(#fbf64e 48%, transparent 48%, transparent 54%, #fbf64e 54%); }
    .clip { width: 9px; margin-left: auto; border-left: 1px solid #000; background: linear-gradient(transparent 47%, #000 47%, #000 53%, transparent 53%); }
    .ruler { display: block; overflow: visible; font-size: 10px; }
    .ruler text { fill: #8c8c8c; }
    .pad2 { padding: 0 11px 0 2px; margin-top: -6px; grid-column: 5; }
    .mix { display: grid; grid-template-columns: 42px 16px 19px minmax(0, 1fr) 27px 43px; align-items: center; column-gap: 3px; padding: 7px 12px 7px 5px; color: #4f4f4f; }
    .mix label { text-align: right; }
    .mix .dry { grid-column: 2 / 4; text-align: right; padding-right: 7px; }
    .mix .wet { padding-left: 3px; }
    .mix .pct { text-align: right; padding-right: 2px; }
    .mix input { appearance: none; height: 11px; width: 100%; background: linear-gradient(#444, #444) center / 100% 2px no-repeat; }
    .mix input::-webkit-slider-thumb { appearance: none; width: 11px; height: 11px; border-radius: 50%; border: 2px solid #4f4f4f; background: #232323; box-shadow: -3px 0 0 -1px #232323; }
    .rfoot { display: flex; gap: 2px; padding: 3px 4px; }
    .rfoot .sq { height: 20px; width: 20px; }
    .rfoot .b { color: #3b8be0; background: #141414; }
    /* history */
    .hist { flex: 1; margin: 3px 5px 0 6px; border: 1px solid #333; border-radius: 3px; background: #1d1d1d; overflow: hidden; }
    .hist div { display: flex; align-items: center; height: 19px; padding-left: 1px; background: #464646; color: #9a9a9a; font-weight: 600; }
    .hist .ic { color: #b4b4b4; }
    .hist .ic + .ic { margin: 0 6px 0 11px; }
    .undo { display: flex; align-items: center; justify-content: space-between; height: 31px; padding: 3px 10px 0 5px; }
    .undo .ic { color: #4f4f4f; }
    .gap30 { margin-left: 22px; }
    /* mixer */
    .mixer { border: 1px solid #3a76ad; padding: 0 4px; }
    .mixer .tabs { height: 31px; padding: 6px 0 0 6px; }
    .mixer .tab.act { margin-left: 35px; }
    .strips { flex: 1; display: flex; align-items: stretch; }
    .heads { width: 35px; flex: none; display: flex; flex-direction: column; margin-bottom: 5px; border: solid #000; border-width: 0 0 1px 1px; color: #b4b4b4; }
    .heads div { border-top: 1px solid #000; display: flex; justify-content: space-between; align-items: flex-start; padding: 8px 3px 0; margin-right: 1px; }
    .heads .h1 { height: 75px; flex-direction: column; justify-content: flex-start; gap: 13px; align-items: flex-end; padding-top: 32px; }
    .heads .h2 { height: 81px; } .heads .h3 { height: 105px; } .heads .h4 { height: 62px; }
    .heads .h5 { height: 28px; justify-content: flex-end; align-items: center; padding: 0 1px 0 0; }
    .heads .h6 { flex: 1 0 372px; }
    .heads .h7 { height: 50px; border-top: 0; justify-content: flex-end; }
    .heads .ic:first-child:not(:last-child) { margin-top: 3px; }
    .heads .h1 .ic:first-child:not(:last-child) { margin-top: 0; }
    .heads i { font-size: 17px; line-height: 16px; }
    .tracks { display: flex; flex: 1; margin-bottom: 16px; background: #1e1e1e; min-width: 0; }
    .tracks .rest { flex: 1; border: solid #000; border-width: 1px 0 0 1px; }
    .mcol { display: flex; flex-direction: column; }
    .mcol channel-strip { flex: 1; }
    .mtime { height: 12px; margin-bottom: 4px; line-height: 18px; text-align: center; border: solid #000; border-width: 0 1px; }
    /* essential sound */
    .es .tabs { height: 28px; }
    .es .sel { height: 28px; padding: 8px 10px; font-style: italic; color: #8a8a8a; }
    .es .pre { display: flex; align-items: center; height: 34px; padding: 0 11px 2px 10px; gap: 5px; color: #4a4a4a; }
    .es .pre .dd { flex: 1; height: 20px; border: 0; background: #292929; color: #444; }
    .es .blank { height: 29px; }
    .clips { padding: 22px 21px; display: flex; flex-direction: column; gap: 10px; }
    .clips button { display: flex; align-items: center; gap: 6px; height: 30px; padding-left: 46%; border: 1px solid #333; border-radius: 3px; background: #1d1d1d; color: #9a9a9a; }
    .clips button .ic { color: #b4b4b4; }
    .clips button:disabled, .clips button:disabled .ic { color: #474747; }
    .clips button:disabled { background: #232323; border-color: #2e2e2e; }
    /* levels */
    .lv .meter { height: 41px; margin: 4px 6px 0 5px; padding: 0; flex: none; }
    .lv .pad { padding: 0 17px 0 6px; }
    .sv table { table-layout: fixed; margin: 1px 29px 0 11px; border-spacing: 0; text-align: right; }
    .sv .tabs { height: 31px; }
    .sv th, .sv td { padding: 0 0 7px; font-weight: 400; text-align: left; vertical-align: top; }
    .sv thead th, .sv thead td { padding-bottom: 5px; }
    .sv td.blue, .sv thead th:last-child { text-align: right; }
    .sv .v1 { width: 50px; } .sv .v2 { width: 43px; } .sv .v3 { width: 72px; }
    .sv thead .v3 { padding-left: 29px; }
    /* status */
    .status { display: flex; align-items: center; height: 19px; margin: 2px 1px 0; padding: 0 48px 0 7px; background: #232323; }
    .status span { border-left: 1px solid #333; line-height: 16px; }
    .status .s1 { margin-left: auto; width: 50px; } .status .s2 { width: 112px; }
    .status .s3 { width: 181px; padding-left: 8px; } .status .s4 { width: 61px; padding-left: 8px; }
    .status .s5 { width: 66px; padding-left: 17px; } .status .s6 { width: 75px; padding-left: 8px; border-right: 1px solid #333; }
    /* page below and taskbar */
    .page { display: flex; height: 25px; padding: 0 2px 0 331px; gap: 14px; line-height: 10px; color: #6b6b6b; position: relative; z-index: 1; }
    .page a { color: inherit; text-decoration: none; }
    .page a.lang { color: #1f4fb4; }
    .page .lead { margin-right: -10px; }
    .page .copy { margin-left: auto; padding-right: 320px; }
    .scroll { width: 13px; display: flex; flex-direction: column; align-items: center; gap: 6px; background: #eee; color: #888; }
    .scroll::before { content: ""; width: 13px; height: 8px; background: #b4b4b4; }
    .task { display: flex; height: 40px; background: linear-gradient(90deg, #202226 0, #2b2d2c 35%, #3d3d39 45%, #3a3a37 52%, #2c2c2b 62%, #232325 80%, #232428); color: #fff; position: relative; z-index: 1; }
    .task > button { width: 49px; display: grid; place-items: center; }
    .task .start { width: 49px; }
    .srch { display: flex; align-items: center; gap: 12px; width: 343px; padding-left: 11px; border: 1px solid #5a5a5a; background: #333; font-size: 14px; color: #d8d8d8; }
    .srch input { flex: 1; min-width: 0; }
    .srch input::placeholder { color: #d8d8d8; opacity: 1; }
    .task .open { background: linear-gradient(#7fd8f2, #7fd8f2) bottom / 40px 2px no-repeat; }
    .task .alert { background: linear-gradient(#f7821c, #f7821c) bottom / 100% 2px no-repeat #b1692d; }
    .task .current { background: linear-gradient(#7fd8f2, #7fd8f2) bottom / 100% 2px no-repeat #595a57; }
    .tray { margin-left: auto; display: flex; align-items: center; }
    .tray button { width: 24px; display: grid; place-items: center; }
    .tray .pen { width: 32px; } .tray .note { width: 40px; }
    .clock { width: 64px; text-align: center; line-height: 18px; font-size: 11px; }
    .edge { width: 5px; height: 40px; margin-left: 8px; border-left: 1px solid #666; }
  `];

  private titlebar() {
    return html`
      <header class="title"><span class="au">Au</span>Adobe Audition
        <div class="winbtns">
          <button aria-label="Minimize"><svg width="11" height="10"><path d="M0 5.500h11" stroke="#000"/></svg></button>
          <button aria-label="Maximize"><svg width="11" height="11"><path d="M.5.500h10v10H.5z" stroke="#000" fill="none"/></svg></button>
          <button aria-label="Close"><svg width="11" height="11"><path d="M.5.500l10 10M10.500.500l-10 10" stroke="#000"/></svg></button>
        </div>
      </header>
      <nav class="menu">${MENU.map((m) => html`<button>${m}</button>`)}</nav>`;
  }

  private toolbar() {
    const b = (n: string, label: string, off = false) =>
      html`<button ?disabled=${off} aria-label=${label}>${icon(n)}</button>`;
    return html`<div class="tools">
      <div class="grip"></div>
      <div class="seg">
        <button>${icon("waveBox")}Waveform</button>
        <button class="sel">${icon("multi")}Multitrack</button>
      </div>
      <div class="view"><span class="vsep"></span>${icon("spectral")}${icon("spectral2")}</div>
      <span class="vsep"></span>
      <div class="toolset">
        <button class="sel" aria-label="Move tool">${icon("move")}</button>
        ${b("razor", "Razor tool")}${b("slip", "Slip tool")}${b("ibeam", "Time selection")}
        ${b("marquee", "Marquee", true)}${b("lasso", "Lasso", true)}${b("brush", "Brush", true)}${b("heal", "Spot healing", true)}
      </div>
      <div class="spaces">
        <a class="blue" href="#default">Default ${icon("burger")}</a>
        <a class="w1" href="#video">Edit Audio to Video</a>
        <a class="w2" href="#radio">Radio Production</a>
        ${icon("more")}
      </div>
      <span class="vsep last"></span>
      <label class="help">${icon("lens")}<input placeholder="Search Help" aria-label="Search Help" /></label>
    </div>`;
  }

  private filesPanel() {
    return html`<section class="panel">
      <div class="tabs"><h2 class="tab act">Files ${icon("burger")}</h2><span class="tab gap30">Favorites</span></div>
      <div class="ftools">
        <button aria-label="Open file">${icon("open")}</button>
        <button aria-label="Import file">${icon("import")}</button>
        <button aria-label="New">${icon("add")}</button>
        <button class="dim far" aria-label="Insert into session">${icon("insert")}</button>
        <button class="dim bin" aria-label="Delete">${icon("trash")}</button>
        <label class="find">${icon("find")}<input aria-label="Filter files" /></label>
      </div>
      <div class="files">
        <div class="frame"></div>
        <table>
          <thead><tr>
            <th class="c1"><span>Name${icon("up")}</span></th><th class="c2">Status</th><th class="c3">Duration</th>
            <th class="c4">Sample Rate</th><th class="c5">Channels</th><th>Bi</th>
          </tr></thead>
          <tbody>${FILES.map(([n, d], i) => html`<tr class=${i ? "" : "hot"}>
            <td><div>${i ? icon("right") : html`<i></i>`}${icon(i ? "wave" : "session")}<span>${n}</span></div></td>
            <td></td><td class="dur">${d}</td><td>44100 Hz</td><td>Stereo</td><td></td></tr>`)}</tbody>
        </table>
        <i class="thumb tv"></i><i class="thumb th"></i>
      </div>
      <div class="transport">
        <button class="dim" aria-label="Play">${icon("play")}</button>
        <button aria-label="Loop">${icon("loop")}</button>
        <button aria-label="Auto-play">${icon("speaker")}</button>
      </div>
    </section>`;
  }

  private rackPanel() {
    const meterRow = (l: string) => html`
      <span class="lab">${l}</span>${icon("bars")}${icon("knobUp")}<span>+0</span>
      <div class="meter"><i class="clip"></i></div>`;
    return html`<section class="panel rack">
      <div class="tabs rtabs">
        <span class="cut">r</span><h2 class="tab act">Effects Rack ${icon("burger")}</h2>
        <span class="t2">Markers</span><span class="t3">Properties</span><span class="t4">Match Loudness</span>
        <span class="t5">Dia</span>
        <span class="m">${icon("more")}</span>
      </div>
      <div class="seg mode"><button>Clip Effects</button><button class="sel">Track Effects</button></div>
      <div class="hr"></div>
      <div class="preset">
        <label for="preset">Presets:</label>
        <div class="dd"><select id="preset"><option>(Default)</option></select>${icon("down")}</div>
        <button aria-label="Save preset">${icon("save")}</button>
        <button aria-label="Delete preset">${icon("trash")}</button>
        <span class="vsep"></span>
        <button class="st" aria-label="Favorite">${icon("star")}</button>
      </div>
      <div class="trk">Track: Master</div>
      <div class="slots">
        <ol>${[1, 2, 3, 4, 5, 6, 7, 8, 9].map((n) => html`<li class=${n === 1 ? "sel" : ""}>
          <span>${n}</span><button class="sq" aria-label="Power ${n}">${icon("power")}</button>
          <button class="go" aria-label="Choose effect ${n}">${icon("tri")}</button></li>`)}</ol>
        <i class="thumb"></i>
      </div>
      <div class="meters">
        ${meterRow("Input:")}${meterRow("Output:")}
        <div class="pad2">${ruler(60, 6, 1)}</div>
      </div>
      <div class="mix"><label for="mix">Mix:</label><span class="dry">Dry</span>
        <input id="mix" type="range" min="0" max="100" .value=${"100"} disabled />
        <span class="wet">Wet</span><span class="pct">100 %</span></div>
      <div class="hr"></div>
      <div class="rfoot">
        <button class="sq" aria-label="Rack power">${icon("power")}</button>
        <button class="sq b" aria-label="Rack list">${icon("list")}</button>
        <button class="sq" aria-label="Pre or post fader">${icon("pre")}</button>
      </div>
    </section>`;
  }

  private historyPanel() {
    return html`<section class="panel">
      <div class="tabs"><h2 class="tab act">History ${icon("burger")}</h2><span class="tab gap30">Video</span></div>
      <div class="hist"><div>${icon("marker")}${icon("doc")}Open</div></div>
      <div class="undo">0 Undo<button aria-label="Delete history">${icon("trash")}</button></div>
    </section>`;
  }

  private mixerPanel() {
    return html`<section class="panel mixer">
      <div class="tabs"><span class="tab">Editor: Brad_Opening_2022_01.sesx *</span><h2 class="tab act">Mixer ${icon("burger")}</h2></div>
      <div class="strips">
        <div class="heads">
          <div class="h1">${icon("inArrow")}${icon("outArrow")}</div>
          <div class="h2">${icon("down")}<i>fx</i></div>
          <div class="h3">${icon("down")}${icon("sends")}</div>
          <div class="h4">${icon("down")}${icon("eq")}</div>
          <div class="h5">${icon("pan")}</div>
          <div class="h6">${icon("down")}${icon("fader")}</div>
          <div class="h7">${icon("rename")}</div>
        </div>
        <div class="tracks">
          ${TRACKS.map((t, i) => html`<channel-strip label="Track ${i + 1}" input="Default Stereo" output="Master"
            volume=${t.vol} position=${t.pos} accent=${t.accent} swatch=${t.swatch} .slots=${t.slots}></channel-strip>`)}
          <div class="rest"></div>
        </div>
        <div class="mcol">
          <channel-strip master label="Master" output="[01S] Headphones" accent="#6c98cc" swatch="#4a9bf5"></channel-strip>
          <div class="mtime">1:17.425</div>
        </div>
      </div>
    </section>`;
  }

  private soundPanel() {
    return html`<section class="panel es">
      <div class="tabs"><h2 class="tab act flat">Essential Sound ${icon("burger")}</h2></div>
      <div class="hr"></div><div class="sel">No Selection</div>
      <div class="hr"></div>
      <div class="pre"><label for="es">Preset:</label><div class="dd"><select id="es" disabled></select>${icon("down")}</div></div>
      <div class="hr"></div><div class="blank"></div><div class="hr"></div>
      <div class="clips"><span>Select clips with Tag:</span>
        ${TAGS.map(([n, l, on]) => html`<button ?disabled=${!on}>${icon(n)}${l}</button>`)}</div>
    </section>`;
  }

  render() {
    return html`
      <main class="window">
        ${this.titlebar()}${this.toolbar()}
        <div class="work">
          <div class="left">${this.filesPanel()}${this.rackPanel()}${this.historyPanel()}</div>
          <div class="right">
            <div class="upper">${this.mixerPanel()}${this.soundPanel()}</div>
            <div class="lower">
              <section class="panel lv">
                <div class="tabs"><h2 class="tab act flat">Levels ${icon("burger")}</h2></div>
                <div class="meter"><i class="clip"></i></div>
                <div class="pad">${ruler(60, 3, 1)}</div>
              </section>
              <section class="panel sv">
                <div class="tabs"><h2 class="tab act flat">Selection/View ${icon("burger")}</h2></div>
                <table>
                  <thead><tr><td class="v1"></td><th class="v2">Start</th><th class="v3">End</th><th>Duration</th></tr></thead>
                  <tbody>
                    <tr><th>Selection</th><td class="blue">1:17.425</td><td class="blue">1:17.425</td><td class="blue">0:00.000</td></tr>
                    <tr><th>View</th><td class="blue">0:00.004</td><td class="blue">1:29.004</td><td class="blue">1:28.999</td></tr>
                  </tbody>
                </table>
              </section>
            </div>
          </div>
        </div>
        <footer class="status">Stopped
          <span class="s1">&nbsp;</span><span class="s2">&nbsp;</span><span class="s3">44100 Hz ● 32-bit Mixing</span>
          <span class="s4">38.25 MB</span><span class="s5">1:53.694</span><span class="s6">2.00 GB free</span>
        </footer>
      </main>
      <div class="page">
        <a href="#c">Using the Community</a><a href="#e">Experience League</a><a href="#t">Terms of Use</a>
        <a href="#p">Privacy Policy</a><a href="#k">Cookie preferences</a><a href="#a">▷AdChoices</a>
        <span class="lead">Language:</span><a class="lang" href="#l">English</a>
        <span class="copy">Copyright © 2021 Adobe. All rights reserved.</span>
        <div class="scroll">${icon("down")}</div>
      </div>
      <nav class="task">
        <button class="start" aria-label="Start"><svg width="16" height="16"><path d="M0 2.500l7-1V7.500H0zM8 1.300L16 0v7.500H8zM0 8.500h7v6l-7-1zM8 8.500h8V16l-8-1.300z" fill="#fff"/></svg></button>
        <label class="srch"><svg class="ic" width="15" height="17"><circle cx="9.500" cy="5.500" r="4.800" fill="none" stroke="#ddd" stroke-width="1.300"/><path d="M6 9L.5 16" stroke="#ddd" stroke-width="1.400"/></svg>
          <input placeholder="Type here to search" aria-label="Search" /></label>
        ${TASKS.map((t) => html`<button class=${t.cls ?? ""} aria-label=${t.label}><svg class="ic" width="22" height="22" viewBox="0 0 22 22">${t.art}</svg></button>`)}
        <div class="tray">
          <button aria-label="Hidden icons"><svg width="12" height="8"><path d="M1 7l5-5 5 5" fill="none" stroke="#fff" stroke-width="1.300"/></svg></button>
          <button aria-label="Cloud"><svg class="ic" width="16" height="16"><path d="M2.500 10Q-.5 9 1 6.500 2 5 4 5.500 5.500 1.500 9 2.500 11 3.500 12 6L12 10z" fill="#bbb"/><circle cx="11.500" cy="10.500" r="4.800" fill="#d8282c"/><path d="M9.700 8.700l3.600 3.600M13.300 8.700l-3.600 3.600" stroke="#fff" stroke-width="1.300"/></svg></button>
          <button aria-label="Microphone"><svg class="ic" width="12" height="17"><rect x="3" y="0" width="6" height="11" rx="2" fill="#fff"/><path d="M.8 8v3q0 2.500 2.500 2.500h5.400q2.500 0 2.500-2.500V8M6 13.500V16M3.500 16.300h5" fill="none" stroke="#fff" stroke-width="1.200"/></svg></button>
          <button aria-label="Network"><svg class="ic" width="16" height="14"><path d="M5 2.500h10.500v7H5M.5 1h4v4h-4zM2.500 5v4.500H5M10 9.500v3M7 13h6.500" fill="none" stroke="#fff" stroke-width="1.200"/></svg></button>
          <button aria-label="Volume"><svg class="ic" width="17" height="14"><path d="M.6 5h2.900L7 1.500v11L3.500 9H.6zM9 5q1.500 2 0 4M11 3q3 4 0 8" fill="none" stroke="#fff" stroke-width="1.200"/><path d="M13.500 1.500q4 5.500 0 11" fill="none" stroke="#888"/></svg></button>
          <button class="pen" aria-label="Pen"><svg class="ic" width="17" height="17"><path d="M5 9Q1 9 .8 12.500 1 16 4 15.500 6.500 15 6.500 11L12.500 2Q14 .5 14.500 2L8 12.500 6.500 14M11 9.500q3-3 4.500-2.500 1 1-1.500 2.500-2 1.500-1 2.500" fill="none" stroke="#fff" stroke-width="1.200"/></svg></button>
          <div class="clock">5:46 PM<br />1/17/2022</div>
          <button class="note" aria-label="Notifications"><svg class="ic" width="17" height="16"><path d="M0 0h16v12H8l-4 3.500V12H0z" fill="#fff"/><path d="M3 3.500h10M3 6h10M3 8.500h6" stroke="#232428" stroke-width="1.200"/><path d="M11 15l4-6" stroke="#232428" stroke-width="3"/><path d="M11 14.500q1 2 3 0L15.500 10" stroke="#fff" fill="none"/></svg></button>
          <div class="edge"></div>
        </div>
      </nav>`;
  }
}
